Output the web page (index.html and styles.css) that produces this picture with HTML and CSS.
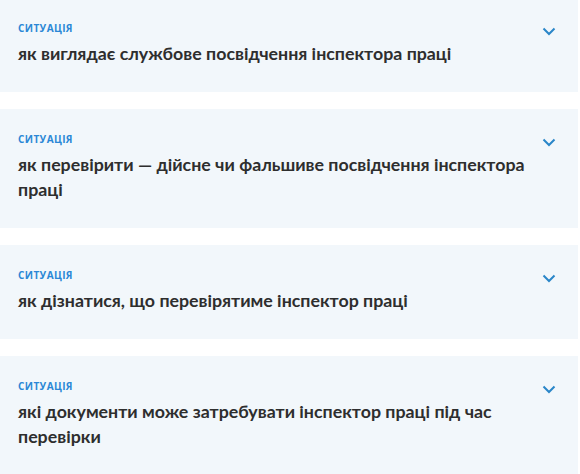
FILE: index.html
```html
<!DOCTYPE html>
<html lang="uk">
<head>
<meta charset="utf-8">
<link rel="stylesheet" href="styles.css">
</head>
<body>
<div class="list">
  <div class="card">
    <div class="content">
      <div class="label">Ситуація</div>
      <div class="title">як виглядає службове посвідчення інспектора праці</div>
    </div>
    <svg class="chev" width="14" height="9" viewBox="0 0 14 9"><path d="M1.5 1.5 L7 7 L12.5 1.5" fill="none" stroke="#2a86c8" stroke-width="2"/></svg>
  </div>
  <div class="card">
    <div class="content">
      <div class="label">Ситуація</div>
      <div class="title">як перевірити — дійсне чи фальшиве посвідчення інспектора праці</div>
    </div>
    <svg class="chev" width="14" height="9" viewBox="0 0 14 9"><path d="M1.5 1.5 L7 7 L12.5 1.5" fill="none" stroke="#2a86c8" stroke-width="2"/></svg>
  </div>
  <div class="card">
    <div class="content">
      <div class="label">Ситуація</div>
      <div class="title">як дізнатися, що перевірятиме інспектор праці</div>
    </div>
    <svg class="chev" width="14" height="9" viewBox="0 0 14 9"><path d="M1.5 1.5 L7 7 L12.5 1.5" fill="none" stroke="#2a86c8" stroke-width="2"/></svg>
  </div>
  <div class="card">
    <div class="content">
      <div class="label">Ситуація</div>
      <div class="title">які документи може затребувати інспектор праці під час перевірки</div>
    </div>
    <svg class="chev" width="14" height="9" viewBox="0 0 14 9"><path d="M1.5 1.5 L7 7 L12.5 1.5" fill="none" stroke="#2a86c8" stroke-width="2"/></svg>
  </div>
</div>
</body>
</html>
```
FILE: styles.css
```css
html, body {
  margin: 0;
  padding: 0;
  background: #ffffff;
}
body {
  font-family: "Lato", "Open Sans", sans-serif;
  overflow: hidden;
}
.list {
  width: 578px;
  margin-top: -2px;
  display: flex;
  flex-direction: column;
  gap: 17px;
}
.card {
  background: #f2f7fb;
  display: flex;
  align-items: flex-start;
  padding: 23px 22px 26px 18px;
}
.content {
  flex: 1;
  padding-right: 12px;
}
.label {
  font-family: "Open Sans", sans-serif;
  font-size: 10px;
  line-height: 14px;
  font-weight: 700;
  text-transform: uppercase;
  letter-spacing: 0.4px;
  color: #2b87d6;
}
.title {
  margin-top: 6px;
  font-size: 17.8px;
  line-height: 25px;
  font-weight: 700;
  color: #2e2e2e;
}
.chev {
  margin-top: 6px;
  flex: none;
}
```
